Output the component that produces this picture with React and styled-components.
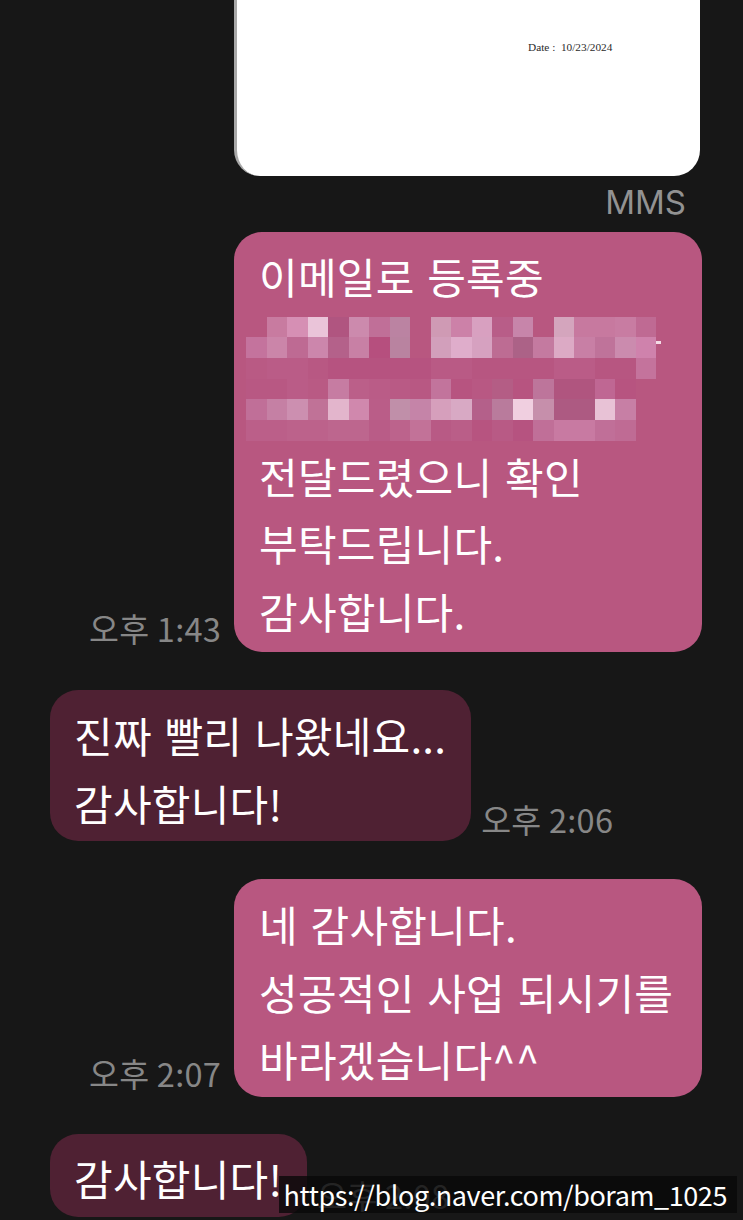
import styled, { createGlobalStyle } from "styled-components";

const KR = `"Noto Sans CJK KR", "Noto Sans", sans-serif`;

// 모자이크 색상, null 은 말풍선 배경 그대로
const MOSAIC = [
  [null, "#c87ba0", "#d68fb4", "#eac4d9", "#b05580", "#cc8aad", "#c06f98", "#bb83a2", null, "#cf9ab4", "#cc81a8", "#d8a0c0", "#b85d88", "#c785aa", null, "#d4a5bd", "#c7799f", "#c7799f", "#c87ca2", "#bf6a93"],
  ["#c4739d", "#cb85a9", "#be6a93", "#cc86ac", "#b4618a", "#c880a5", "#b64f7e", "#b983a0", null, "#d29fbb", "#dfadcb", "#d6a1c0", "#bd6c93", "#ac6287", "#c47aa0", "#dcaac5", "#c87fa5", "#bf739a", "#cb8bae", "#cf82ac"],
  ["#b95a84", "#ba5c87", "#ba5c87", "#b85883", "#b65380", "#b65380", "#b65380", "#b65380", "#b65380", "#b95a85", "#b95a85", "#b75681", "#b75681", "#b75681", "#b75681", "#ba5c87", "#ba5c87", "#b75681", "#b75681", "#c4739c"],
  ["#b85883", "#b85883", "#ba5c87", "#b95a84", "#c67ca2", "#bb5f89", "#ba5c87", "#b95a85", "#b85883", "#c2749c", "#b75480", "#b85883", "#b45d85", "#b75480", "#bd759b", "#b0557f", "#b0557f", "#bf6793", "#b75480", null],
  ["#c06f98", "#c580a4", "#cc8fb0", "#c07297", "#e3b5cc", "#d088ad", "#ba5d88", "#c08fa9", "#c584a8", "#d69fbc", "#d8a9c4", "#b4608a", "#b97b9c", "#f0cfe0", "#c68fab", "#ad5a82", "#ad5a82", "#e8c2d6", "#c77fa5", null],
  ["#bb5f89", "#bb5f89", "#bc628b", "#bc628b", "#bd668e", "#bd668e", "#b95c87", "#bc638c", "#c27298", "#b85a85", "#ba5e88", "#b75480", "#b85a85", "#b65380", "#c06f98", "#c87aa2", "#c87aa2", "#c06f98", "#bf6b94", null],
];

const App = () => {
  return (
    <Screen>
      <GlobalStyle />
      <Photo>
        <DateText>Date :&nbsp;&nbsp;10/23/2024</DateText>
      </Photo>
      <MmsLabel>MMS</MmsLabel>

      <SentRow $mt={14}>
        <Time $mb={3}>오후 1:43</Time>
        <SentBubble $pt={12} $pb={6}>
          <Line>이메일로 등록중</Line>
          <Mosaic>
            {MOSAIC.flat().map((color, i) => (
              <Cell key={i} style={{ background: color || "transparent" }} />
            ))}
          </Mosaic>
          <Line>전달드렸으니 확인</Line>
          <Line>부탁드립니다.</Line>
          <Line>감사합니다.</Line>
        </SentBubble>
      </SentRow>

      <ReceivedRow $mt={38}>
        <ReceivedBubble $pt={13} $pb={3}>
          <Line>진짜 빨리 나왔네요...</Line>
          <Line>감사합니다!</Line>
        </ReceivedBubble>
        <Time $mb={1}>오후 2:06</Time>
      </ReceivedRow>

      <SentRow $mt={38}>
        <Time $mb={3}>오후 2:07</Time>
        <SentBubble $pt={13} $pb={2}>
          <Line>네 감사합니다.</Line>
          <Line>성공적인 사업 되시기를</Line>
          <Line>바라겠습니다^^</Line>
        </SentBubble>
      </SentRow>

      <ReceivedRow $mt={37}>
        <ReceivedBubble $pt={12} $pb={4}>
          <Line>감사합니다!</Line>
        </ReceivedBubble>
        <Time $mb={1}>오후 2:08</Time>
      </ReceivedRow>

      <Watermark>https://blog.naver.com/boram_1025</Watermark>
    </Screen>
  );
};

const GlobalStyle = createGlobalStyle`
  html, body {
    margin: 0;
    padding: 0;
    background: #171717;
  }
`;

const Screen = styled.div`
  position: relative;
  width: 743px;
  height: 1220px;
  overflow: hidden;
  background: #171717;
  font-family: ${KR};
  color: #fff;
`;

const Photo = styled.div`
  box-sizing: border-box;
  width: 466px;
  height: 176px;
  margin-left: 234px;
  padding: 40px 0 0 291px;
  background: #fff;
  border-left: 3px solid #a9a9a9;
  border-radius: 0 0 26px 26px;
`;

const DateText = styled.div`
  font-family: "Liberation Serif", serif;
  font-size: 11.3px;
  line-height: 14px;
  color: #2b2b2b;
  white-space: nowrap;
`;

const MmsLabel = styled.div`
  margin: 6px 57px 0 0;
  height: 36px;
  line-height: 40px;
  text-align: right;
  font-family: Inter, sans-serif;
  font-size: 33px;
  color: #929292;
`;

const SentRow = styled.div`
  display: flex;
  justify-content: flex-end;
  align-items: flex-end;
  gap: 13px;
  margin-top: ${(p) => p.$mt}px;
  padding-right: 41px;
`;

const ReceivedRow = styled.div`
  display: flex;
  align-items: flex-end;
  gap: 10px;
  margin-top: ${(p) => p.$mt}px;
  padding-left: 50px;
`;

const SentBubble = styled.div`
  box-sizing: border-box;
  width: 468px;
  padding: ${(p) => p.$pt}px 12px ${(p) => p.$pb}px 25px;
  border-radius: 28px;
  background: #b85780;
`;

const ReceivedBubble = styled.div`
  padding: ${(p) => p.$pt}px 25px ${(p) => p.$pb}px 24px;
  border-radius: 28px;
  background: #4f2133;
`;

const Line = styled.div`
  height: 67.5px;
  line-height: 63.5px;
  font-size: 42px;
  letter-spacing: 0.25px;
  word-spacing: 3px;
  white-space: nowrap;
`;

const Mosaic = styled.div`
  position: relative;
  display: grid;
  grid-template-columns: repeat(20, 20.5px);
  grid-auto-rows: 20.7px;
  margin: 5px 0 3px -13px;

  &::after {
    content: "";
    position: absolute;
    top: 24px;
    left: 410px;
    width: 5px;
    height: 3px;
    background: #f3dbe6;
  }
`;

const Cell = styled.div``;

const Time = styled.div`
  margin-bottom: ${(p) => p.$mb}px;
  font-size: 32.5px;
  letter-spacing: 0.25px;
  line-height: 42px;
  color: #878787;
  white-space: nowrap;
`;

const Watermark = styled.div`
  position: absolute;
  top: 1176px;
  left: 279px;
  width: 458px;
  height: 37px;
  padding-right: 10px;
  box-sizing: border-box;
  background: rgba(8, 8, 8, 0.78);
  font-size: 27px;
  letter-spacing: -0.42px;
  line-height: 37px;
  text-align: right;
  white-space: nowrap;
`;

export default App;
